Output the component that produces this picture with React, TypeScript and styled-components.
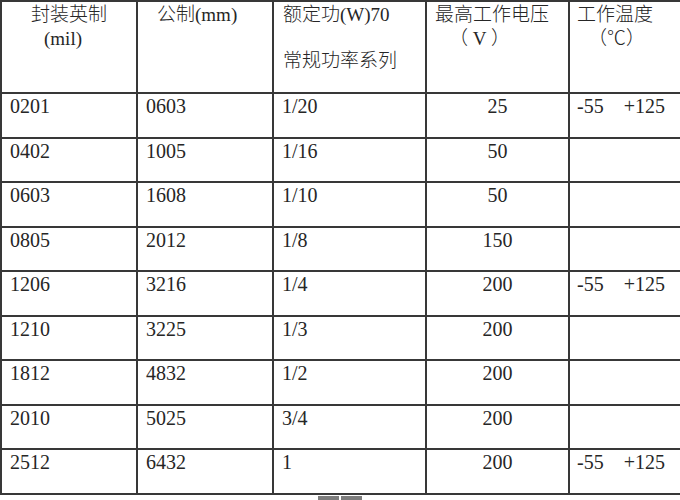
import styled, { createGlobalStyle } from 'styled-components';

const GlobalStyle = createGlobalStyle`
  html, body {
    margin: 0;
    padding: 0;
    background: #fff;
    overflow: hidden;
  }
  body {
    width: 680px;
    height: 500px;
    font-family: "Liberation Serif", "Noto Sans CJK SC", serif;
    color: #262626;
  }
`;

type Row = {
  inch: string;
  metric: string;
  power: string;
  voltage: string;
  temp?: boolean;
};

const rows: Row[] = [
  { inch: '0201', metric: '0603', power: '1/20', voltage: '25', temp: true },
  { inch: '0402', metric: '1005', power: '1/16', voltage: '50' },
  { inch: '0603', metric: '1608', power: '1/10', voltage: '50' },
  { inch: '0805', metric: '2012', power: '1/8', voltage: '150' },
  { inch: '1206', metric: '3216', power: '1/4', voltage: '200', temp: true },
  { inch: '1210', metric: '3225', power: '1/3', voltage: '200' },
  { inch: '1812', metric: '4832', power: '1/2', voltage: '200' },
  { inch: '2010', metric: '5025', power: '3/4', voltage: '200' },
  { inch: '2512', metric: '6432', power: '1', voltage: '200', temp: true },
];

// 行の高さ。線の位置がずれないように整数で交互に
const rowHeights = rows.map((_, i) => (i % 2 === 0 ? '45px' : '44px')).join(' ');

export default function App() {
  return (
    <>
      <GlobalStyle />
      <Sheet>
        <HeadCell $align="center">
          <HeadLine>封装英制</HeadLine>
          <HeadLine $indent={-12}>(mil)</HeadLine>
        </HeadCell>
        <HeadCell $pad={19}>
          <HeadLine>公制(mm)</HeadLine>
        </HeadCell>
        <HeadCell $pad={9}>
          <HeadLine>额定功(W)70</HeadLine>
          <HeadLine $gap={22}>常规功率系列</HeadLine>
        </HeadCell>
        <HeadCell $pad={8}>
          <HeadLine>最高工作电压</HeadLine>
          <HeadLine $indent={14}>（ V ）</HeadLine>
        </HeadCell>
        <HeadCell $pad={7}>
          <HeadLine>工作温度</HeadLine>
          <HeadLine $indent={11}>（℃）</HeadLine>
        </HeadCell>

        {rows.map((r) => (
          <RowGroup key={r.inch}>
            <Cell>{r.inch}</Cell>
            <Cell>{r.metric}</Cell>
            <Cell>{r.power}</Cell>
            <Cell $center>{r.voltage}</Cell>
            <Cell $pad={7}>{r.temp ? '-55    +125' : ''}</Cell>
          </RowGroup>
        ))}
      </Sheet>
      <Pager>
        <PagerTab />
        <PagerTab />
      </Pager>
    </>
  );
}

// 表全体。外枠は左と上だけ、残りはセルの右・下の線
const Sheet = styled.div`
  display: grid;
  grid-template-columns: 136px 136px 153px 143px 114px;
  grid-template-rows: 92px ${rowHeights};
  border-left: 2px solid #383838;
  border-top: 2px solid #383838;
  width: max-content;
`;

// 各行はグリッドにそのまま流す
const RowGroup = styled.div`
  display: contents;
`;

const HeadCell = styled.div<{ $align?: 'left' | 'center'; $pad?: number }>`
  box-sizing: border-box;
  border-right: 2px solid #383838;
  border-bottom: 2px solid #383838;
  padding: 1px 0 0 ${(p) => p.$pad ?? 0}px;
  text-align: ${(p) => p.$align ?? 'left'};
  font-size: 19px;
  line-height: 24px;
  font-weight: 300;
`;

const HeadLine = styled.div<{ $indent?: number; $gap?: number }>`
  white-space: pre;
  margin-top: ${(p) => p.$gap ?? 0}px;
  padding-left: ${(p) => Math.max(p.$indent ?? 0, 0)}px;
  padding-right: ${(p) => Math.max(-(p.$indent ?? 0), 0)}px;
`;

const Cell = styled.div<{ $center?: boolean; $pad?: number }>`
  box-sizing: border-box;
  border-right: 2px solid #383838;
  border-bottom: 2px solid #383838;
  padding-left: ${(p) => (p.$center ? 0 : p.$pad ?? 8)}px;
  text-align: ${(p) => (p.$center ? 'center' : 'left')};
  font-size: 20px;
  line-height: 24px;
  white-space: pre;
`;

// 下に少しだけ見えているビューアのつまみ
const Pager = styled.div`
  display: flex;
  gap: 2px;
  padding-left: 318px;
  margin-top: 1px;
`;

const PagerTab = styled.div`
  width: 21px;
  height: 6px;
  background: #7d7d7d;
`;
